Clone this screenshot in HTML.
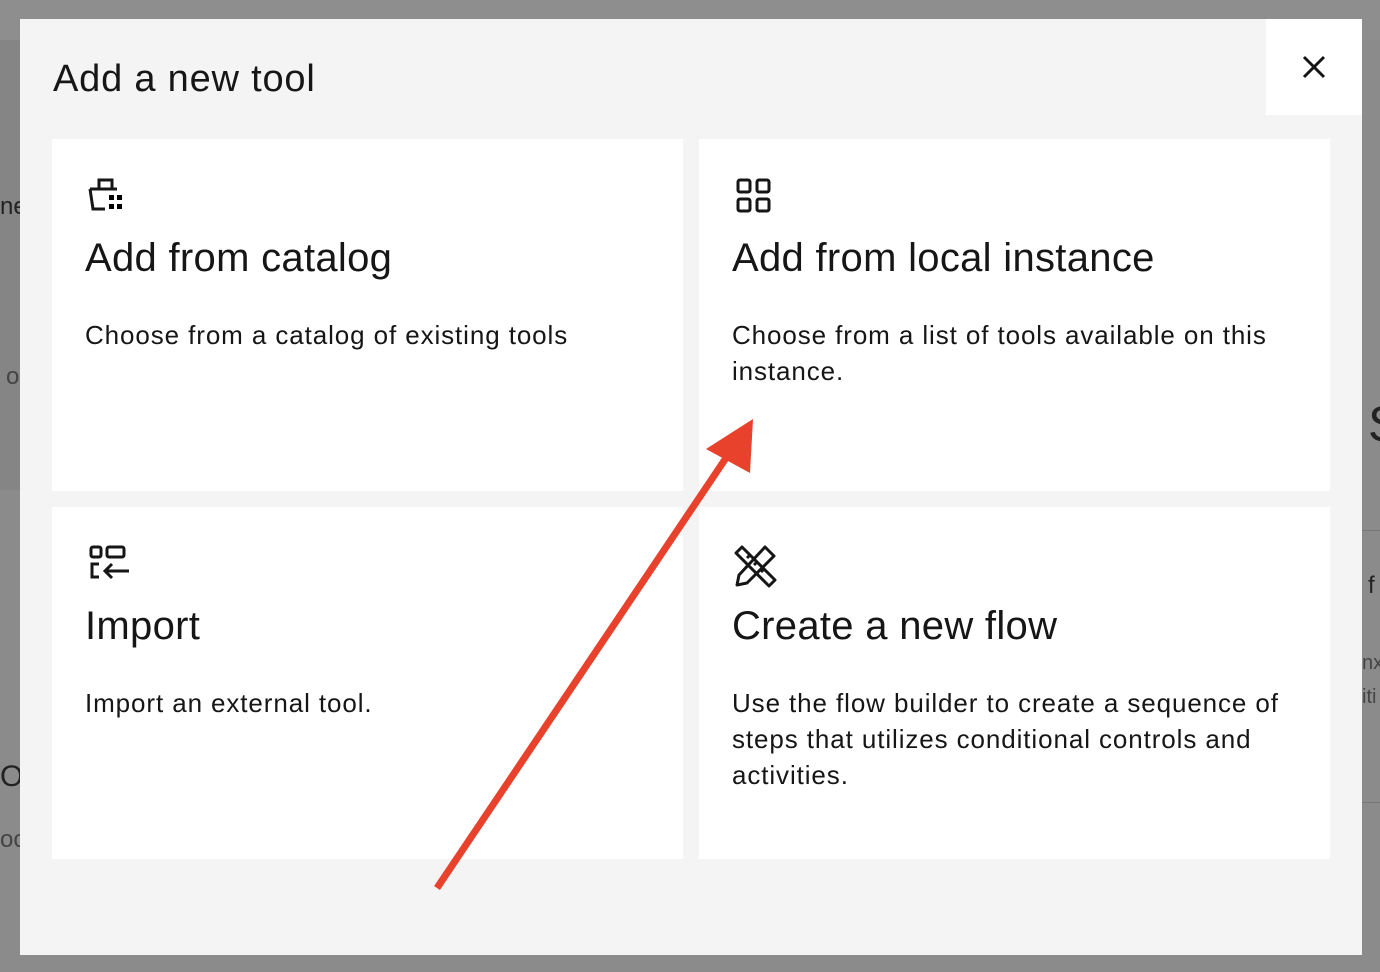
<!DOCTYPE html>
<html><head><style>
body{margin:0;width:1380px;height:972px;background:#8b8b8b;position:relative;overflow:hidden;font-family:"Liberation Sans",sans-serif;color:#161616}
.bg1{position:absolute;left:0;top:0;width:1380px;height:40px;background:#8e8e8e}
.bgl{position:absolute;left:0;top:40px;width:20px;height:450px;background:#858585}
.modal{position:absolute;left:20px;top:19px;width:1342px;height:936px;background:#f4f4f4}
.close{position:absolute;left:1246px;top:0;width:96px;height:96px;background:#fff}
h1{position:absolute;left:33px;top:39px;margin:0;font-weight:400;font-size:38px;letter-spacing:0.8px}
.card{position:absolute;background:#fff;width:631px;height:352px}
.card svg{position:absolute;left:33px;top:36px}
.card h2{position:absolute;left:33px;top:97px;margin:0;font-weight:400;font-size:40px;letter-spacing:0.3px}
.card p{position:absolute;left:33px;top:178px;margin:0;font-size:26px;line-height:36px;width:570px;letter-spacing:0.9px}
.side{position:absolute;color:#222;font-size:24px}
</style></head><body>
<div class="bg1"></div><div class="bgl"></div>
<div class="side" style="left:0;top:193px">ne</div>
<div class="side" style="left:6px;top:363px;color:#444">o</div>
<div class="side" style="left:0;top:760px;font-size:30px">O</div>
<div class="side" style="left:0;top:826px;color:#444">oo</div>
<div class="side" style="left:1368px;top:395px;font-size:50px">S</div>
<div class="side" style="left:1368px;top:572px">f</div>
<div class="side" style="left:1362px;top:652px;color:#444;font-size:20px">nx</div>
<div class="side" style="left:1362px;top:686px;color:#444;font-size:20px">iti</div>
<div style="position:absolute;left:1362px;top:530px;width:18px;height:1px;background:#777"></div>
<div style="position:absolute;left:1362px;top:802px;width:18px;height:1px;background:#777"></div>
<div class="modal">
<h1>Add a new tool</h1>
<div class="close"><svg width="96" height="96"><path d="M38 38L58 58M58 38L38 58" stroke="#161616" stroke-width="3"/></svg></div>
<div class="card" style="left:32px;top:120px">
<svg width="44" height="40" viewBox="0 0 44 40"><path d="M5 14h27M5 14l3 20h12" fill="none" stroke="#161616" stroke-width="3"/><path d="M14 14V5h13v9" fill="none" stroke="#161616" stroke-width="3"/><rect x="24" y="20" width="5" height="5"/><rect x="32" y="20" width="5" height="5"/><rect x="24" y="29" width="5" height="5"/><rect x="32" y="29" width="5" height="5"/></svg>
<h2>Add from catalog</h2><p>Choose from a catalog of existing tools</p></div>
<div class="card" style="left:679px;top:120px">
<svg width="44" height="40" viewBox="0 0 44 40"><g fill="none" stroke="#161616" stroke-width="3"><rect x="6" y="5" width="12" height="12" rx="2"/><rect x="25" y="5" width="12" height="12" rx="2"/><rect x="6" y="24" width="12" height="12" rx="2"/><rect x="25" y="24" width="12" height="12" rx="2"/></g></svg>
<h2>Add from local instance</h2><p>Choose from a list of tools available on this instance.</p></div>
<div class="card" style="left:32px;top:488px">
<svg width="50" height="40" viewBox="0 0 50 40"><g fill="none" stroke="#161616" stroke-width="3"><rect x="6" y="4" width="10" height="10" rx="2"/><rect x="22" y="4" width="17" height="10" rx="2"/><path d="M14 21H7v13h7M44 28H20M27 21l-7 7 7 7"/></g></svg>
<h2>Import</h2><p>Import an external tool.</p></div>
<div class="card" style="left:679px;top:488px">
<svg width="50" height="46" viewBox="0 0 50 46"><g fill="none" stroke="#161616" stroke-width="3" stroke-linejoin="round"><path d="M4 10l6-6 33 33-6 6z"/><path d="M18 12l-3 3M25 19l-3 3M32 26l-3 3"/><path d="M33 4l9 9-27 27-10 2 2-10z"/></g></svg>
<h2>Create a new flow</h2><p>Use the flow builder to create a sequence of steps that utilizes conditional controls and activities.</p></div>
</div>
<svg style="position:absolute;left:0;top:0" width="1380" height="972"><line x1="437" y1="888" x2="728" y2="455" stroke="#e8412c" stroke-width="7"/><polygon points="753,419 706,449 750,473" fill="#e8412c"/></svg>
</body></html>
